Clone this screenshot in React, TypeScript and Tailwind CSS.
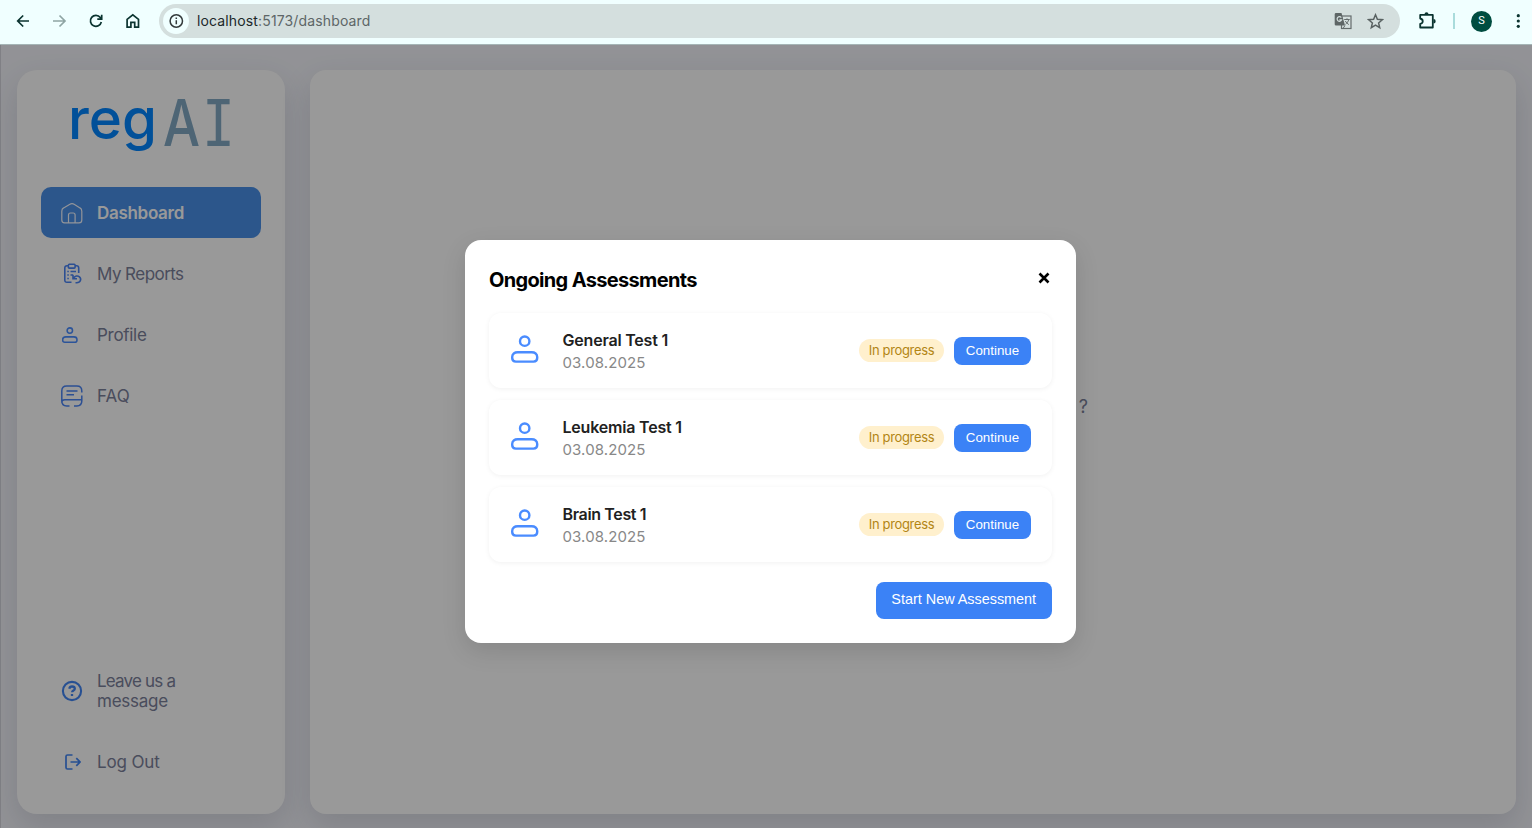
import React from "react";

const jakarta = "font-['Inter','Liberation_Sans',sans-serif]";

function PersonIcon({ className, weight = 2.4 }: { className: string; weight?: number }) {
  return (
    <svg className={className} viewBox="0 0 28 28" fill="none" stroke="#4a8cff" strokeWidth={weight}>
      <circle cx="13.700" cy="6.200" r="4.700" />
      <path d="M1.200 23v-1c0-3 2.400-4.700 5.500-4.700h14c3.100 0 5.500 1.700 5.500 4.700v1c0 2.400-1.300 3.600-3.700 3.600H4.900c-2.400 0-3.700-1.200-3.700-3.600z" />
    </svg>
  );
}

function BrowserBar() {
  return (
    <header className="flex h-[45px] shrink-0 items-center border-b border-[#a5b5b6] bg-[#f0ffff] pb-[2px] pl-4 text-[#0b3430]">
      <svg className="h-4 w-4 shrink-0" viewBox="0 0 16 16" fill="none" stroke="currentColor" strokeWidth="1.700"><path d="M13 8H2M7.200 2.500 1.700 8l5.500 5.500" /></svg>
      <svg className="ml-5 h-4 w-4 shrink-0" viewBox="0 0 16 16" fill="none" stroke="#8fa5a4" strokeWidth="1.700"><path d="M1 8h11M7.500 2.500 13 8l-5.500 5.500" /></svg>
      <svg className="ml-5 h-4 w-4 shrink-0" viewBox="0 0 16 16" fill="none" stroke="currentColor" strokeWidth="1.700"><path d="M13.300 9a5.500 5.500 0 1 1-1-4.500l1.400 1.500M13.700 1.800V6.200H9.300" /></svg>
      <svg className="ml-5 h-4 w-4 shrink-0" viewBox="0 0 16 16" fill="none" stroke="currentColor" strokeWidth="1.700"><path d="M3.100 6.300 8.800 1.900l5.700 4.400v7.800h-3.800V9.300H6.900v4.800H3.100z" /></svg>
      <div className="ml-[19px] flex h-[34px] w-[1241px] shrink-0 items-center rounded-full bg-[#d4dfde] pl-1">
        <div className="flex h-[26px] w-[26px] items-center justify-center rounded-full bg-[#f0ffff]">
          <svg className="h-4 w-4" viewBox="0 0 16 16" fill="none" stroke="#333a3b" strokeWidth="1.500"><circle cx="8.300" cy="8" r="6.200" /><path d="M8.300 7.200v4M8.300 4.600v1.400" /></svg>
        </div>
        <span className="mb-[2px] ml-[8px] font-['Inter',sans-serif] text-[14px] tracking-[0.140px] text-[#5d6667]"><span className="text-[#20282a]">localhost</span>:5173/dashboard</span>
        <svg className="ml-auto h-[18px] w-[18px]" viewBox="0 0 18 18" fill="none">
          <rect x="7.500" y="4" width="9.500" height="12.500" stroke="#646c6c" strokeWidth="1.200" />
          <path d="M2 1h5.500l3.500 12.500H2a1.300 1.300 0 0 1-1.300-1.300V2.300A1.300 1.300 0 0 1 2 1z" fill="#5e6666" />
          <path d="M7.300 5.600a2.300 2.300 0 1 0 .3 2.200H5.400" stroke="#d4dfde" strokeWidth="1.200" />
          <path d="M10.200 7.500h5.500M13 6.300v1.200M14.800 7.500c-.5 2-1.700 3.500-3.300 4.800M11.300 9c.8 1.500 2 2.700 3.500 3.600M9 16.500l2-3" stroke="#646c6c" strokeWidth="1" />
        </svg>
        <svg className="mr-[16px] ml-[15px] h-[17px] w-[17px]" viewBox="0 0 17 17" fill="none" stroke="#596262" strokeWidth="1.500"><path d="m8.500 1.800 1.900 4.500 4.900.4-3.700 3.200 1.100 4.800-4.200-2.600-4.200 2.600 1.100-4.800-3.700-3.200 4.900-.4z" /></svg>
      </div>
      <svg className="ml-[18px] h-[20px] w-[20px] shrink-0" viewBox="0 0 20 20"><path d="M2.200 3.900h12.600v12.600H2.200v-3.600c3.400-.7 3.400-4.700 0-5.400z" fill="none" stroke="currentColor" strokeWidth="1.800" strokeLinejoin="round" /><path d="M6.500 3.300a2 2 0 0 1 4 0zM15.500 8a2.200 2.200 0 0 1 0 4.400z" fill="currentColor" /></svg>
      <div className="ml-[15px] h-4 w-[2px] bg-[#a9dcdc]" />
      <div className="ml-4 flex h-[21px] w-[21px] items-center justify-center rounded-full bg-[#004d40] font-['Roboto',sans-serif] text-[11px] text-white">S</div>
      <svg className="ml-[18px] h-4 w-4 shrink-0" viewBox="0 0 16 16" fill="currentColor"><circle cx="8.300" cy="2.700" r="1.600" /><circle cx="8.300" cy="8" r="1.600" /><circle cx="8.300" cy="13.300" r="1.600" /></svg>
    </header>
  );
}

function Logo() {
  return (
    <svg className="-mt-[25px] h-[102px] w-[200px] self-center" viewBox="0 0 200 102" role="img" aria-label="regAI">
      <text x="17" y="68.500" fontFamily="Inter" fontSize="57" fontWeight="500" fill="#0285ff" textLength="89" lengthAdjust="spacingAndGlyphs">reg</text>
      <text x="112" y="76" fontFamily="Inter" fontSize="64" fontWeight="500" fill="#83a9c4" textLength="37" lengthAdjust="spacingAndGlyphs">A</text>
      <text x="151" y="76" fontFamily="DejaVu Sans Mono" fontSize="64" fill="#83a9c4" textLength="33" lengthAdjust="spacingAndGlyphs">I</text>
    </svg>
  );
}

function HomeIcon() {
  return <svg className="h-[22px] w-[22px]" viewBox="0 0 22 22" fill="none" stroke="#f4f7ff" strokeWidth="1.200"><path d="M.8 9.200c0-1.700.3-2.500 1.800-3.300l5.900-3.500c1.700-1 3.300-1 5 0l5.500 3.500c1.500.8 1.800 1.600 1.800 3.300V18c0 2-.8 2.900-2.800 2.900H3.600C1.600 20.900.8 20 .8 18zM7.500 20.900V13c0-1.500.6-2 2-2h2.600c1.400 0 2 .5 2 2v7.900" /></svg>;
}

function ReportIcon() {
  return <svg className="h-[22px] w-[22px]" viewBox="0 0 22 22" fill="none" stroke="#4a84f5" strokeWidth="1.600"><path d="M10.500 19.300H6c-1.500 0-2.200-.7-2.200-2.200V5c0-1.500.7-2.200 2.200-2.200h1.500M14 2.800h1.500c1.500 0 2.200.7 2.200 2.200v5M8.300 1.300h4.900c.6 0 .9.300.9.900v2c0 .6-.3.900-.9.900H8.300c-.6 0-.9-.3-.9-.9v-2c0-.6.3-.9.900-.9zM6.300 8.500h1.500M9.500 8.500h5.500M6.300 12h1.500M9.500 12h2.500M6.300 15.500h1.500M12 11.700v4h4M12.400 15.300c1.500-2.400 4.200-3 6-1.500 2.400 2 1.200 6-2.700 6h-1.200" /></svg>;
}

function FaqIcon() {
  return <svg className="h-[22px] w-[22px]" viewBox="0 0 22 22" fill="none" stroke="#4a84f5" strokeWidth="1.500"><path d="M20.800 7.500V6c0-3.700-1.300-4.900-4.900-4.900H5.700C2.100 1.100.8 2.300.8 6v10c0 3.600 1.300 4.900 4.900 4.900h2.800M.8 17.500c0-2 1.200-2.800 3-2.800h17M20.800 10.500V16c0 3.600-1.300 4.900-4.900 4.900H13M5.500 6h11M5.500 9.700h7.500" /></svg>;
}

function NavItem({ icon, children, active = false, tracking }: { icon: React.ReactNode; children: React.ReactNode; active?: boolean; tracking: string }) {
  return (
    <div className={`flex h-[51px] items-center rounded-[10px] pl-[19.500px] text-[17px] leading-5 ${active ? "bg-[#4a90e8] font-semibold text-white" : "text-[#7b809a]"}`}>
      <div className="flex w-[22px] shrink-0 items-center justify-center">{icon}</div>
      <span className={`ml-[14.500px] whitespace-nowrap ${tracking}`}>{children}</span>
    </div>
  );
}

function Sidebar() {
  return (
    <aside className="flex w-[268px] shrink-0 flex-col rounded-[20px] bg-white px-6 pt-[25px] pb-[26px] shadow-[0_12px_30px_rgba(50,55,80,0.15)]">
      <Logo />
      <nav className="mt-[15px] flex flex-col gap-[10px]">
        <NavItem active icon={<HomeIcon />} tracking="tracking-[-0.300px]">Dashboard</NavItem>
        <NavItem icon={<ReportIcon />} tracking="tracking-[-0.550px]">My Reports</NavItem>
        <NavItem icon={<PersonIcon className="mr-1 h-4 w-4" weight={2.7} />} tracking="tracking-[-0.300px]">Profile</NavItem>
        <NavItem icon={<FaqIcon />} tracking="tracking-[0px]">FAQ</NavItem>
      </nav>
      <div className="mt-auto flex flex-col gap-[20px]">
        <NavItem tracking="tracking-[-0.800px]" icon={<svg className="h-[22px] w-[22px]" viewBox="0 0 22 22" fill="none" stroke="#4285f4" strokeWidth="2.100"><circle cx="11" cy="11" r="9.100" /><path d="M8.300 8.700c.3-1.500 1.200-2.200 2.700-2.200 1.700 0 2.800.8 2.800 2.200 0 2-2.700 1.700-2.700 3.600M11 14v2" strokeWidth="2.300" /></svg>}>Leave us a<br /><span className="tracking-[-0.250px]">message</span></NavItem>
        <NavItem tracking="tracking-[-0.150px]" icon={<svg className="ml-[3px] h-4 w-4" viewBox="0 0 16 16" fill="none" stroke="#4285f4" strokeWidth="1.700"><path d="M7.500 1H2.500C1.500 1 1 1.500 1 2.500v11c0 1 .5 1.500 1.500 1.500h5M5.500 8H15M11.300 4.200 15 8l-3.700 3.800" /></svg>}>Log Out</NavItem>
      </div>
    </aside>
  );
}

function AssessmentRow({ name, tracking }: { name: string; tracking: string }) {
  return (
    <div className="flex h-[75px] items-center rounded-[12px] bg-white pr-[21px] pl-[22px] shadow-[0_1px_5px_rgba(0,0,0,0.06)]">
      <PersonIcon className="mb-[3px] h-7 w-7" />
      <div className="mt-[2px] ml-[23.500px]">
        <div className={`text-[16px] leading-[23px] font-semibold text-[#212121] ${tracking}`}>{name}</div>
        <div className="text-[15px] leading-[22px] tracking-[0.100px] text-[#888]">03.08.2025</div>
      </div>
      <div className="ml-auto flex h-[23px] w-[85px] items-center justify-center rounded-full bg-[#fff0cd] pt-px text-[13px] tracking-[-0.350px] whitespace-nowrap text-[#b28514]">In progress</div>
      <button className="ml-[10px] h-[28px] w-[77px] rounded-[8px] bg-[#3b82f6] font-['Liberation_Sans',sans-serif] text-[13.333px] text-white">Continue</button>
    </div>
  );
}

export default function App() {
  return (
    <div className={`flex h-[828px] w-[1532px] flex-col overflow-hidden ${jakarta}`}>
      <BrowserBar />
      <main className="relative flex min-h-0 flex-1 gap-[25px] border-l border-[#808085] bg-[#f3f4fa] pt-[25px] pr-4 pb-[14.500px] pl-[16px]">
        <Sidebar />
        <section className="flex flex-1 items-center justify-end rounded-[16px] bg-white pr-[428px] pb-[71px] text-[18px] text-[#7b809a] shadow-[0_12px_30px_rgba(50,55,80,0.15)]">?</section>
        <div className="absolute inset-0 flex items-start justify-center bg-black/40 pt-[195px] pl-[8px]">
          <div role="dialog" className="flex h-[403px] w-[611px] flex-col rounded-[16px] bg-white p-6 shadow-[0_8px_24px_rgba(0,0,0,0.12)]">
            <div className="flex h-[31px] items-center justify-between">
              <h2 className="text-[20px] leading-[30px] font-bold tracking-[-0.670px] text-black">Ongoing Assessments</h2>
              <svg className="mr-[2px] mb-[3px] h-3 w-3" viewBox="0 0 12 12" fill="none" stroke="black" strokeWidth="2.600"><path d="m1.500 1.500 9 9M10.500 1.500l-9 9" /></svg>
            </div>
            <div className="mt-[18px] flex flex-col gap-3">
              <AssessmentRow name="General Test 1" tracking="tracking-[-0.200px]" />
              <AssessmentRow name="Leukemia Test 1" tracking="tracking-[-0.200px]" />
              <AssessmentRow name="Brain Test 1" tracking="tracking-[-0.350px]" />
            </div>
            <button className="mt-[20px] h-[36.500px] w-[176.500px] self-end rounded-[8px] bg-[#3b82f6] font-['Liberation_Sans',sans-serif] text-[14.400px] text-white">Start New Assessment</button>
          </div>
        </div>
      </main>
    </div>
  );
}
